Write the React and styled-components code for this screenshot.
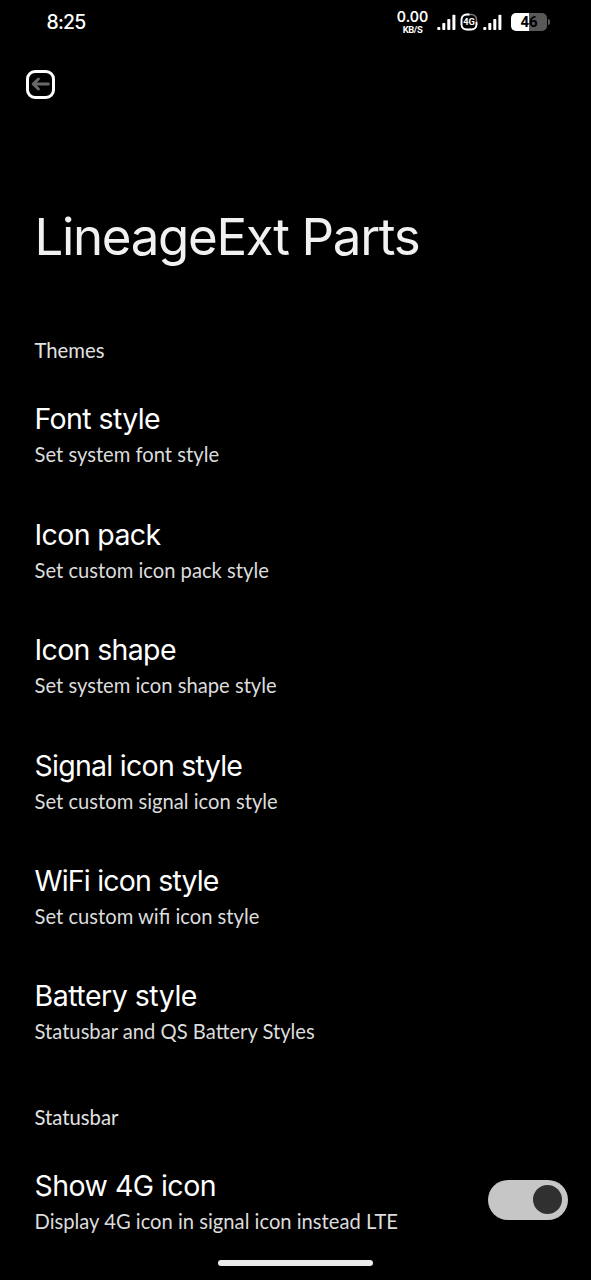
import React from 'react';
import styled, { createGlobalStyle } from 'styled-components';

const GlobalStyle = createGlobalStyle`
  * { box-sizing: border-box; }
  body { margin: 0; background: #000; color: #fff; font-family: Inter, sans-serif; }
`;

const Screen = styled.main`
  position: relative;
  width: 591px;
  height: 1280px;
  overflow: hidden;
  display: flex;
  flex-direction: column;
  background: #000;
`;

const StatusBar = styled.header`
  flex: none;
  height: 44px;
  padding: 0 44px 0 46.5px;
  display: flex;
  align-items: center;
  justify-content: space-between;
`;

const Clock = styled.time`
  font-size: 19.4px;
  font-weight: 500;
  line-height: 24px;
  letter-spacing: -0.8px;
`;

const StatusIcons = styled.div`
  display: flex;
  align-items: center;
  svg { display: block; flex: none; }
`;

const NetSpeed = styled.div`
  width: 33px;
  padding-top: 1px;
  margin-right: 8px;
  display: flex;
  flex-direction: column;
  align-items: center;
  white-space: nowrap;
`;

const SpeedValue = styled.span`
  font-size: 14px;
  font-weight: 600;
  line-height: 14px;
`;

const SpeedUnit = styled.span`
  font-family: Roboto, sans-serif;
  font-size: 9.4px;
  font-weight: 700;
  line-height: 11px;
  letter-spacing: -0.4px;
`;

const Battery = styled.div`
  position: relative;
  width: 36px;
  height: 18px;
  margin-left: 8px;
  border-radius: 5px;
  background: linear-gradient(to right, #fff 50%, #585858 50%);
  color: #000;
  font: 700 15px/19px Roboto, sans-serif;
  text-align: center;
  &::after {
    content: '';
    position: absolute;
    left: 37px;
    top: 6px;
    width: 2px;
    height: 6px;
    border-radius: 0 2px 2px 0;
    background: #585858;
  }
`;

const Toolbar = styled.nav`
  flex: none;
  padding: 25.5px 26px 0;
`;

const BackButton = styled.button`
  display: grid;
  place-items: center;
  width: 29px;
  height: 29px;
  padding: 0;
  border: 3px solid #fff;
  border-radius: 9px;
  background: none;
  svg { display: block; }
`;

const PageTitle = styled.h1`
  flex: none;
  margin: 106px 0 0 34.5px;
  font-size: 51px;
  font-weight: 400;
  line-height: 64px;
  letter-spacing: -1.33px;
  color: #f1f1f1;
  white-space: nowrap;
`;

const Section = styled.section`
  flex: none;
  padding: 0 23px 0 34.5px;
  margin-top: ${p => p.$gap}px;
`;

const SectionLabel = styled.h2`
  margin: 0 0 37.3px;
  font: 400 20.3px/24px Lato, sans-serif;
  color: #e2e2e2;
`;

const List = styled.div`
  display: flex;
  flex-direction: column;
  gap: 48.4px;
`;

const Row = styled.div`
  display: flex;
  align-items: center;
  justify-content: space-between;
  height: 67px;
  white-space: nowrap;
`;

const RowTitle = styled.div`
  margin-bottom: 3px;
  font-size: 28.5px;
  line-height: 40px;
  letter-spacing: ${p => p.$tracking}px;
`;

const RowSummary = styled.div`
  font: 400 20.2px/24px Lato, sans-serif;
  color: #dcdcdc;
`;

const Switch = styled.div`
  width: 80px;
  height: 40px;
  padding-right: 6px;
  border-radius: 20px;
  background: #c6c6c6;
  display: flex;
  align-items: center;
  justify-content: flex-end;
`;

const Thumb = styled.div`
  width: 29px;
  height: 29px;
  border-radius: 50%;
  background: #303030;
`;

const HomeBar = styled.div`
  position: absolute;
  left: 218px;
  bottom: 14px;
  width: 155px;
  height: 6px;
  border-radius: 3px;
  background: #ebebeb;
`;

const Gap = styled.span`
  flex: none;
  width: ${p => p.$w}px;
`;

const Signal = () => (
  <svg width="20" height="17" viewBox="0 0 20 17" fill="#fff">
    <rect x="0.3" y="13" width="3" height="3" rx="0.8" />
    <rect x="5.3" y="9" width="3" height="7" rx="0.8" />
    <rect x="10.3" y="5" width="3" height="11" rx="0.8" />
    <rect x="15.4" y="0.7" width="3" height="15.3" rx="0.8" />
  </svg>
);

const NetworkBadge = () => (
  <svg width="18" height="18" viewBox="0 0 18 18" fill="none">
    <rect x="1.5" y="1.5" width="15" height="15" rx="5" stroke="#777" strokeWidth="1.6" />
    <path d="M9.5 1.5H6.5A5 5 0 0 0 1.5 6.5V11.5A5 5 0 0 0 6.5 16.5H11.5A5 5 0 0 0 16.5 11.5V9" stroke="#fff" strokeWidth="1.8" />
    <text x="9" y="12.4" textAnchor="middle" fill="#fff" fontFamily="Roboto, sans-serif" fontWeight="700" fontSize="9.3">4G</text>
  </svg>
);

const themes = [
  { title: 'Font style', summary: 'Set system font style', tracking: -0.6 },
  { title: 'Icon pack', summary: 'Set custom icon pack style', tracking: -0.62 },
  { title: 'Icon shape', summary: 'Set system icon shape style', tracking: -0.65 },
  { title: 'Signal icon style', summary: 'Set custom signal icon style', tracking: -0.73 },
  { title: 'WiFi icon style', summary: 'Set custom wifi icon style', tracking: -0.82 },
  { title: 'Battery style', summary: 'Statusbar and QS Battery Styles', tracking: -0.48 },
];

const Preference = ({ title, summary, tracking, children }) => (
  <Row>
    <div>
      <RowTitle $tracking={tracking}>{title}</RowTitle>
      <RowSummary>{summary}</RowSummary>
    </div>
    {children}
  </Row>
);

export default function App() {
  return (
    <Screen>
      <GlobalStyle />
      <StatusBar>
        <Clock>8:25</Clock>
        <StatusIcons>
          <NetSpeed>
            <SpeedValue>0.00</SpeedValue>
            <SpeedUnit>KB/S</SpeedUnit>
          </NetSpeed>
          <Signal />
          <Gap $w={3} />
          <NetworkBadge />
          <Gap $w={5} />
          <Signal />
          <Battery>46</Battery>
        </StatusIcons>
      </StatusBar>
      <Toolbar>
        <BackButton aria-label="Back">
          <svg width="20" height="16" viewBox="0 0 20 16" fill="none" stroke="#686868" strokeWidth="3" strokeLinecap="round" strokeLinejoin="round">
            <path d="M17.3 8H2.5M7.4 3L2.2 8L7.4 13" />
          </svg>
        </BackButton>
      </Toolbar>
      <PageTitle>LineageExt Parts</PageTitle>
      <Section $gap={69.6}>
        <SectionLabel>Themes</SectionLabel>
        <List>
          {themes.map(item => <Preference key={item.title} {...item} />)}
        </List>
      </Section>
      <Section $gap={61.8}>
        <SectionLabel>Statusbar</SectionLabel>
        <Preference title="Show 4G icon" summary="Display 4G icon in signal icon instead LTE" tracking={-0.53}>
          <Switch><Thumb /></Switch>
        </Preference>
      </Section>
      <HomeBar />
    </Screen>
  );
}
